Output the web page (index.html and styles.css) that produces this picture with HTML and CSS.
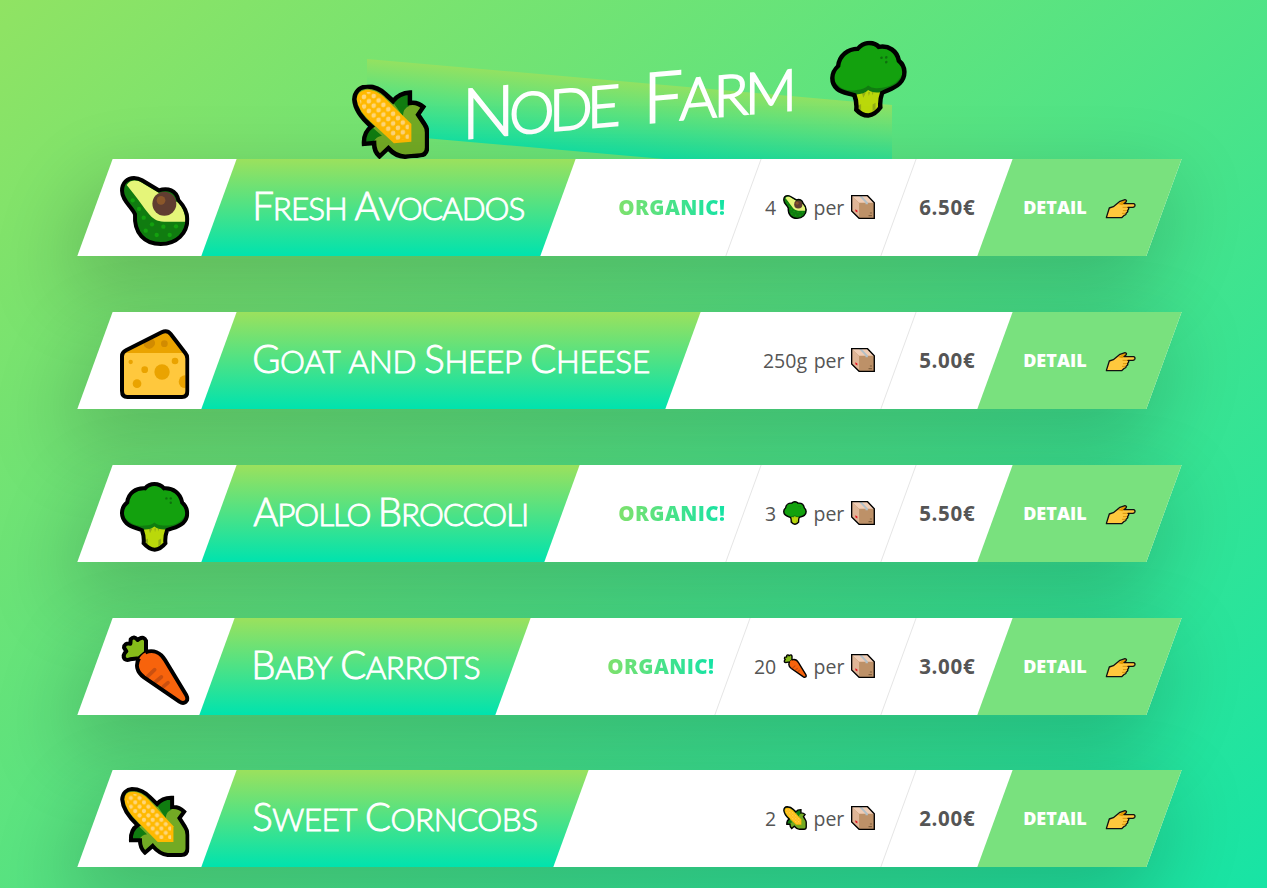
FILE: index.html
```html
<!DOCTYPE html>
<html lang="en">
<head>
<meta charset="utf-8">
<title>Node Farm</title>
<link rel="stylesheet" href="styles.css">
</head>
<body>
<svg class="sprite" aria-hidden="true">
  <defs>
    <pattern id="kernels" x="167" y="87" width="26" height="26" patternUnits="userSpaceOnUse">
      <circle cx="13" cy="13" r="6.2" fill="#ffd679"/>
      <circle cx="0" cy="0" r="6.2" fill="#ffd679"/><circle cx="26" cy="0" r="6.2" fill="#ffd679"/>
      <circle cx="0" cy="26" r="6.2" fill="#ffd679"/><circle cx="26" cy="26" r="6.2" fill="#ffd679"/>
    </pattern>
    <clipPath id="cheese-clip"><path d="M160 129H346V257H160Z"/></clipPath>
  </defs>
  <symbol id="avocado" viewBox="150 78 208 210">
    <path d="M192 84C172 84 156 99 156 122C156 152 184 168 195 193C191 250 225 282 272 282C320 282 352 250 352 207C352 182 340 166 325 150C318 120 294 113 266 121L216 91C206 85 200 84 192 84Z" fill="#107c10"/>
    <path d="M170 105Q183 86 208 94L266 128L325 158Q346 180 346 215H282C238 213 238 187 170 105Z" fill="#e5f579"/>
    <circle cx="283" cy="161" r="36" fill="#603d30"/><circle cx="273" cy="151" r="13" fill="#8b572a"/>
    <g fill="#13a10e"><circle cx="188" cy="151" r="6.5"/><circle cx="207" cy="177" r="6.5"/><circle cx="221" cy="203" r="6.5"/><circle cx="246" cy="223" r="6.5"/><circle cx="280" cy="230" r="6.5"/><circle cx="318" cy="229" r="6.5"/><circle cx="227" cy="242" r="6.5"/><circle cx="260" cy="255" r="6.5"/><circle cx="299" cy="255" r="6.5"/></g>
    <path d="M192 84C172 84 156 99 156 122C156 152 184 168 195 193C191 250 225 282 272 282C320 282 352 250 352 207C352 182 340 166 325 150C318 120 294 113 266 121L216 91C206 85 200 84 192 84Z" fill="none" stroke="#000" stroke-width="12"/>
  </symbol>
  <symbol id="cheese" viewBox="150 57 208 210">
    <path d="M156 138Q156 127 168 121L275 67Q291 59 302 72L345 128Q352 136 352 146V243Q352 261 336 261H172Q156 261 156 243Z" fill="#ffc83d"/>
    <path d="M158 129L280 66Q292 62 300 73L344 129Z" fill="#eaa300"/>
    <circle cx="283" cy="101" r="10" fill="#d18b00"/><path d="M221 98L248 86Q260 96 252 108Q238 126 222 108Z" fill="#d18b00"/>
    <g fill="#eaa300" clip-path="url(#cheese-clip)"><circle cx="182" cy="156" r="6.5"/><circle cx="224" cy="179" r="10"/><circle cx="276" cy="186" r="23"/><circle cx="315" cy="153" r="10"/><circle cx="201" cy="221" r="13"/><circle cx="345" cy="215" r="19"/></g>
    <path d="M156 138Q156 127 168 121L275 67Q291 59 302 72L345 128Q352 136 352 146V243Q352 261 336 261H172Q156 261 156 243Z" fill="none" stroke="#000" stroke-width="12"/>
  </symbol>
  <symbol id="broccoli" viewBox="150 67 208 209">
    <path d="M218 195H290L286 250Q272 268 254 269Q234 267 221 250Z" fill="#bad80a"/>
    <path d="M236 206H247L240 220ZM253 206H258L255 217ZM263 206H268L265 215ZM226 240L234 236V252H226ZM265 240L273 236V254L265 258Z" fill="#93ad16"/>
    <path d="M253 73C240 73 232 78 225 86C198 84 175 100 172 128C152 144 151 172 170 190C190 206 210 212 225 209Q243 209 253 200Q263 209 283 209C302 210 320 205 338 190C357 172 354 144 336 128C331 100 308 84 282 86C275 78 266 73 253 73Z" fill="#107c10"/>
    <path d="M253 76C240 76 232 80 226 89C198 86 177 100 174 130C158 145 157 163 168 176C184 194 205 200 222 197Q243 198 253 188Q263 198 283 197C304 198 325 192 338 176C351 163 350 145 334 130C329 100 308 86 281 89C275 80 266 76 253 76Z" fill="#13a10e"/>
    <g fill="#0e6f0e"><circle cx="289" cy="116" r="3.5"/><circle cx="302" cy="116" r="3.5"/><circle cx="302" cy="129" r="3.5"/></g>
    <path d="M253 73C240 73 232 78 225 86C198 84 175 100 172 128C152 144 151 172 170 190C184 203 202 204 216 211Q223 230 221 250Q236 268 254 269Q272 268 286 250Q284 230 291 211C308 204 323 203 338 190C357 172 354 144 336 128C331 100 308 84 282 86C275 78 266 73 253 73Z" fill="none" stroke="#000" stroke-width="12"/>
  </symbol>
  <symbol id="carrot" viewBox="150 75 208 210">
    <path d="M228 127V92Q222 78 208 86L203 90Q192 76 182 88L181 101Q163 98 162 113L169 124Q156 136 164 147Q170 152 180 148L207 145Z" fill="#86bc1a" stroke="#000" stroke-width="12" stroke-linejoin="round"/>
    <path d="M228 127C250 118 272 128 285 150L349 256Q356 269 347 276Q339 282 328 275L222 202C200 186 196 158 212 139Q219 130 228 127Z" fill="#f7630c"/>
    <path d="M233 199L254 179M256 216L274 201M280 230L294 218" stroke="#ca5010" stroke-width="11" stroke-linecap="round"/>
    <path d="M226 127C250 118 272 128 285 150L349 256Q356 269 347 276Q339 282 328 275L222 202C200 186 196 164 207 145" fill="none" stroke="#000" stroke-width="12"/>
  </symbol>
  <symbol id="corn" viewBox="148 67 206 209">
    <path d="M183 73C205 73 225 84 240 100L258 118Q274 98 303 99V127Q323 125 339 141L325 160L342 187Q349 197 349 210V250Q349 270 330 270H290Q265 267 245 243L222 263Q207 250 207 226H180Q178 195 200 181C167 150 155 122 154 104C155 84 168 74 183 73Z" fill="#73aa24"/>
    <path d="M258 122Q274 101 301 103V135Q285 140 284 160ZM181 222Q181 194 202 183L228 208Q212 210 206 222Z" fill="#107c10"/>
    <path d="M160 104C163 76 198 72 231 103L307 184V231H260L190 160Q164 132 160 104Z" fill="#ffb900"/>
    <path d="M168 104C171 84 198 79 228 110L300 184V223H264L194 156Q172 132 168 104Z" fill="url(#kernels)"/>
    <path d="M183 73C205 73 225 84 240 100L258 118Q274 98 303 99V127Q323 125 339 141L325 160L342 187Q349 197 349 210V250Q349 270 330 270H290Q265 267 245 243L222 263Q207 250 207 226H180Q178 195 200 181C167 150 155 122 154 104C155 84 168 74 183 73Z" fill="none" stroke="#000" stroke-width="12"/>
  </symbol>
  <symbol id="box" viewBox="755 135 71 71">
    <path d="M757 137H804L824 158V204H779L757 182Z" fill="#bd9168"/>
    <path d="M757 137L779 159V204L757 182Z" fill="#dfb596"/>
    <path d="M757 137H804L824 158H779Z" fill="#f0cdb5"/>
    <path d="M779 138H787L805 157V162H798V158Z" fill="#b3c0c7"/>
    <path d="M768 177L774 181V187L768 183Z" fill="#e81224"/>
    <path d="M811 188H817M807 196H817" stroke="#80603f" stroke-width="3"/>
    <path d="M757 137H804L824 158V204H779L757 182Z" fill="none" stroke="#000" stroke-width="4"/>
  </symbol>
  <symbol id="hand" viewBox="677 149 92 60">
    <path d="M680 205L689 176L701 172L721 156L736 151Q743 152 739 158L733 163H762Q768 165 765 171Q763 174 759 174H745Q750 178 744 183Q746 188 740 191Q740 197 734 198L726 205Z" fill="#ffc83d"/>
    <path d="M715 164L734 153Q743 152 739 158L728 168Z" fill="#e59a00"/>
    <path d="M729 174H745M730 184H744M727 192H738" stroke="#d28a00" stroke-width="2.5"/>
    <path d="M680 205L689 176L701 172L721 156L736 151Q743 152 739 158L733 163H762Q768 165 765 171Q763 174 759 174H745Q750 178 744 183Q746 188 740 191Q740 197 734 198L726 205Z" fill="none" stroke="#111" stroke-width="4" stroke-linejoin="round"/>
  </symbol>
</svg>

<header class="header">
  <div class="header__band"></div>
  <h1 class="header__title">
    <svg class="header__icon"><use href="#corn"/></svg>
    <span class="header__text"><span class="word">Node</span> <span class="word">Farm</span></span>
    <svg class="header__icon"><use href="#broccoli"/></svg>
  </h1>
</header>

<main class="cards">
  <article class="card">
    <div class="card__thumb"><svg class="card__picture"><use href="#avocado"/></svg></div>
    <h2 class="card__name card__name--avocado"><span class="label"><span class="word">Fresh</span> <span class="word">Avocados</span></span></h2>
    <div class="card__organic"><span class="organic">Organic!</span></div>
    <div class="card__quantity card__quantity--ruled"><span class="content">4 <svg class="mini"><use href="#avocado"/></svg> per <svg class="mini"><use href="#box"/></svg></span></div>
    <div class="card__price"><span class="content">6.50€</span></div>
    <a class="card__link"><span class="link"><span>Detail</span><svg class="hand"><use href="#hand"/></svg></span></a>
  </article>

  <article class="card">
    <div class="card__thumb"><svg class="card__picture"><use href="#cheese"/></svg></div>
    <h2 class="card__name card__name--cheese"><span class="label"><span class="word">Goat</span> <span class="word word--small">and</span> <span class="word">Sheep</span> <span class="word">Cheese</span></span></h2>
    <div class="card__organic"></div>
    <div class="card__quantity"><span class="content">250g per <svg class="mini"><use href="#box"/></svg></span></div>
    <div class="card__price"><span class="content">5.00€</span></div>
    <a class="card__link"><span class="link"><span>Detail</span><svg class="hand"><use href="#hand"/></svg></span></a>
  </article>

  <article class="card">
    <div class="card__thumb"><svg class="card__picture"><use href="#broccoli"/></svg></div>
    <h2 class="card__name card__name--broccoli"><span class="label"><span class="word">Apollo</span> <span class="word">Broccoli</span></span></h2>
    <div class="card__organic"><span class="organic">Organic!</span></div>
    <div class="card__quantity card__quantity--ruled"><span class="content">3 <svg class="mini"><use href="#broccoli"/></svg> per <svg class="mini"><use href="#box"/></svg></span></div>
    <div class="card__price"><span class="content">5.50€</span></div>
    <a class="card__link"><span class="link"><span>Detail</span><svg class="hand"><use href="#hand"/></svg></span></a>
  </article>

  <article class="card">
    <div class="card__thumb card__thumb--narrow"><svg class="card__picture"><use href="#carrot"/></svg></div>
    <h2 class="card__name card__name--carrot"><span class="label"><span class="word">Baby</span> <span class="word">Carrots</span></span></h2>
    <div class="card__organic"><span class="organic">Organic!</span></div>
    <div class="card__quantity card__quantity--ruled card__quantity--wide"><span class="content">20 <svg class="mini"><use href="#carrot"/></svg> per <svg class="mini"><use href="#box"/></svg></span></div>
    <div class="card__price"><span class="content">3.00€</span></div>
    <a class="card__link"><span class="link"><span>Detail</span><svg class="hand"><use href="#hand"/></svg></span></a>
  </article>

  <article class="card">
    <div class="card__thumb"><svg class="card__picture"><use href="#corn"/></svg></div>
    <h2 class="card__name card__name--corn"><span class="label"><span class="word">Sweet</span> <span class="word">Corncobs</span></span></h2>
    <div class="card__organic"></div>
    <div class="card__quantity"><span class="content">2 <svg class="mini"><use href="#corn"/></svg> per <svg class="mini"><use href="#box"/></svg></span></div>
    <div class="card__price"><span class="content">2.00€</span></div>
    <a class="card__link"><span class="link"><span>Detail</span><svg class="hand"><use href="#hand"/></svg></span></a>
  </article>
</main>
</body>
</html>
```
FILE: styles.css
```css
* { box-sizing: border-box; margin: 0; padding: 0; }

html {
  height: 888px;
  overflow: hidden;
  background: linear-gradient(to bottom right, #90e363, #0ee4aa) 0 0 / 100% 1040px no-repeat;
}

body {
  height: 888px;
  overflow: hidden;
  font-family: "Open Sans", "Noto Sans", sans-serif;
  font-size: 20px;
  color: #555;
}

.sprite { position: absolute; width: 0; height: 0; }

.header { position: relative; height: 159px; padding-top: 50px; }

.header__band {
  position: absolute;
  top: 82px;
  left: 367px;
  width: 525px;
  height: 74px;
  background: linear-gradient(to bottom, #9be15d, #00e3ae);
  opacity: 0.8;
  transform: skewY(5deg);
}

.header__title {
  display: flex;
  justify-content: center;
  align-items: center;
  gap: 37px;
  height: 99px;
  padding-right: 8px;
  transform: skewY(-5deg);
  color: #fff;
}

.header__icon { width: 77px; height: 78px; }

.header__text {
  width: 327px;
  font: 300 57px/100px Lato, sans-serif;
  letter-spacing: -3.2px;
  word-spacing: 16px;
  white-space: nowrap;
  -webkit-text-stroke: 2px #fff;
}

.word { display: inline-block; text-transform: uppercase; }
.header__text .word:first-child { margin-left: -4px; letter-spacing: -5.2px; }
.word::first-letter { font-size: 1.22em; }
.word--small::first-letter { font-size: 1em; }

.cards {
  position: relative;
  display: flex;
  flex-direction: column;
  gap: 56px;
  width: 1069px;
  margin-left: 95px;
}

.card {
  display: flex;
  flex: none;
  height: 96.85px;
  background: #fff;
  box-shadow: 0 30px 75px 8px rgba(0, 0, 0, 0.18);
  transform: skewX(-20deg);
}

.card > * { display: flex; align-items: center; justify-content: center; flex: none; }
.card > * > * { transform: skewX(20deg); }

.card__thumb { width: 124px; padding: 7px 2px 0 0; }
.card__thumb--narrow { width: 122px; padding-right: 0; }
.card__picture { width: 70px; height: 70px; }

.card__name {
  background: linear-gradient(to bottom, #9be15d, #00e3ae);
  color: #fff;
  font: 300 31.5px/97px Lato, sans-serif;
  white-space: nowrap;
  -webkit-text-stroke: 0.9px #fff;
}
.card__name--avocado { width: 339px; letter-spacing: -1px; }
.card__name--cheese { width: 464px; letter-spacing: -0.3px; }
.card__name--broccoli { width: 343px; letter-spacing: -1.1px; }
.card__name--carrot { width: 296px; letter-spacing: -0.5px; }
.card__name--corn { width: 352px; letter-spacing: -0.5px; }

.card .card__organic { flex: 1; justify-content: flex-end; padding-right: 18px; }

.organic {
  background: linear-gradient(to right, #7fe16c, #14e3a5);
  -webkit-background-clip: text;
  background-clip: text;
  color: transparent;
  font-size: 20.5px;
  font-weight: 800;
  letter-spacing: 0.45px;
  text-transform: uppercase;
}

.card .card__quantity { width: 155px; justify-content: flex-end; padding-right: 22.5px; }
.card .card__quantity--wide { width: 166px; }
.card__quantity--ruled { border-left: 1px solid #e5e5e5; }
.card__quantity .content { font-size: 19.5px; word-spacing: 1.6px; }

.card__price { width: 97px; border-left: 1px solid #e5e5e5; font-size: 20.5px; font-weight: 700; letter-spacing: 0.7px; }

.content { white-space: nowrap; }

.mini { width: 24px; height: 24px; vertical-align: -4px; }

.card__link {
  width: 169px;
  background: #79e17e;
  color: #fff;
  font-size: 18px;
  font-weight: 800;
  text-transform: uppercase;
}

.link { display: flex; align-items: center; gap: 18px; }
.hand { width: 31px; height: 20px; margin-top: 4px; }
```
